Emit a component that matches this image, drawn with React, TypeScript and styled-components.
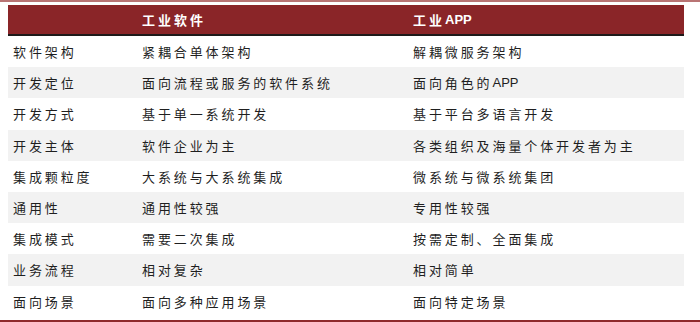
import React from 'react'
import styled, { createGlobalStyle } from 'styled-components'

const GlobalStyle = createGlobalStyle`
  html, body {
    margin: 0;
    padding: 0;
    background: #ffffff;
  }
  body {
    font-family: "Noto Sans CJK SC", "Liberation Sans", sans-serif;
  }
`

const Frame = styled.div`
  width: 700px;
  height: 322px;
  box-sizing: border-box;
  border-top: 2px solid #b97474;
  border-bottom: 2px solid #8e2a2c;
  padding: 3px 16px 0 8px;
  margin-bottom: 1px;
  display: flex;
  flex-direction: column;
`

const Table = styled.div`
  display: grid;
  grid-template-columns: 129px 271px 276px;
`

const HeaderCell = styled.div`
  height: 29px;
  background: #8a2528;
  border-bottom: 2px solid #1e1a1a;
  color: #ffffff;
  font-size: 13px;
  font-weight: 700;
  letter-spacing: 3px;
  display: flex;
  align-items: center;
  padding-left: 5px;
`

const Latin = styled.span`
  font-family: "Liberation Sans", "Noto Sans", sans-serif;
  letter-spacing: 0;
`

const Cell = styled.div<{ $striped: boolean }>`
  height: 31.2px;
  background: ${p => (p.$striped ? '#f2f2f2' : '#ffffff')};
  color: #1f1f1f;
  font-size: 13px;
  letter-spacing: 2.9px;
  display: flex;
  align-items: center;
  padding-left: 5px;
  white-space: nowrap;
`

const rows: [string, string, string][] = [
  ['软件架构', '紧耦合单体架构', '解耦微服务架构'],
  ['开发定位', '面向流程或服务的软件系统', '面向角色的APP'],
  ['开发方式', '基于单一系统开发', '基于平台多语言开发'],
  ['开发主体', '软件企业为主', '各类组织及海量个体开发者为主'],
  ['集成颗粒度', '大系统与大系统集成', '微系统与微系统集团'],
  ['通用性', '通用性较强', '专用性较强'],
  ['集成模式', '需要二次集成', '按需定制、全面集成'],
  ['业务流程', '相对复杂', '相对简单'],
  ['面向场景', '面向多种应用场景', '面向特定场景'],
]

const renderText = (text: string) => {
  const parts = text.split(/(APP)/)
  return parts.map((part, i) => (part === 'APP' ? <Latin key={i}>{part}</Latin> : part))
}

const App: React.FC = () => {
  return (
    <>
      <GlobalStyle />
      <Frame>
        <Table>
          <HeaderCell />
          <HeaderCell>工业软件</HeaderCell>
          <HeaderCell>
            工业<Latin>APP</Latin>
          </HeaderCell>
          {rows.map((row, r) =>
            row.map((text, c) => (
              <Cell key={`${r}-${c}`} $striped={r % 2 === 1}>
                {renderText(text)}
              </Cell>
            ))
          )}
        </Table>
      </Frame>
    </>
  )
}

export default App
